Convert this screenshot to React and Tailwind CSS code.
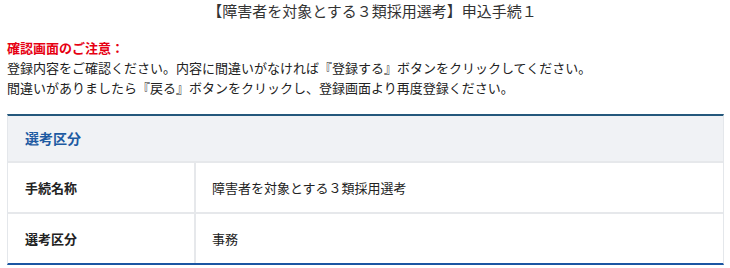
import React from 'react';

const rows = [
  { label: '手続名称', value: '障害者を対象とする３類採用選考' },
  { label: '選考区分', value: '事務' },
];

const App = () => {
  return (
    <div
      className="w-[730px] h-[268px] bg-white text-[#222] overflow-hidden"
      style={{ fontFamily: '"Noto Sans CJK JP", "Noto Sans", sans-serif' }}
    >
      {/* Title */}
      <h1 className="text-center text-[15px] leading-[22px] pl-[14px] text-[#333]">
        【障害者を対象とする３類採用選考】申込手続１
      </h1>

      {/* Notice */}
      <div className="mt-[16px] px-[7px] text-[13px] leading-[20px]">
        <p className="font-bold text-[#e60012]">確認画面のご注意：</p>
        <p>登録内容をご確認ください。内容に間違いがなければ『登録する』ボタンをクリックしてください。</p>
        <p>間違いがありましたら『戻る』ボタンをクリックし、登録画面より再度登録ください。</p>
      </div>

      {/* Confirmation panel */}
      <section className="ml-[7px] mr-[6px] mt-[16px] border-t-2 border-b-2 border-x border-t-[#24587c] border-b-[#1b56a3] border-x-[#e4e7eb]">
        <div className="h-[45px] bg-[#f0f2f5] flex items-center px-[17px]">
          <h2 className="text-[14px] font-bold text-[#1d5aa2]">選考区分</h2>
        </div>
        {rows.map((row) => (
          <div key={row.label} className="flex h-[51px] border-t-2 border-[#e6e8eb]">
            <div className="w-[188px] flex items-center px-[17px] text-[13px] font-bold border-r-2 border-[#e6e8eb]">
              {row.label}
            </div>
            <div className="flex-1 flex items-center px-[16px] text-[13px]">
              {row.value}
            </div>
          </div>
        ))}
      </section>
    </div>
  );
};

export default App;
